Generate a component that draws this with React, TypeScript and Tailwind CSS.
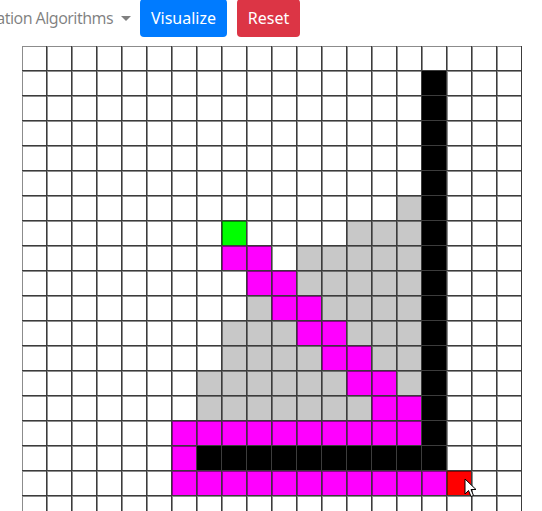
import React from "react";

const board = [
  "....................",
  "................#...",
  "................#...",
  "................#...",
  "................#...",
  "................#...",
  "...............g#...",
  "........S....ggg#...",
  "........mm.ggggg#...",
  ".........mmggggg#...",
  ".........gmmgggg#...",
  "........gggmmggg#...",
  "........ggggmmgg#...",
  ".......ggggggmmg#...",
  ".......gggggggmm#...",
  "......mmmmmmmmmm#...",
  "......m##########...",
  "......mmmmmmmmmmmE..",
  "....................",
  "....................",
];

const cellColor: Record<string, string> = {
  ".": "bg-white",
  "#": "bg-black",
  g: "bg-[#c8c8c8]",
  m: "bg-[#ff00ff]",
  S: "bg-[#00ff00]",
  E: "bg-[#ff0000]",
};

const Cursor = () => (
  <svg
    className="absolute left-[17px] top-[7px] z-10"
    width="13"
    height="20"
    viewBox="0 0 13 20"
  >
    <path
      d="M1 1 L1 16 L4.5 12.5 L7 18.5 L9.5 17.5 L7 11.5 L12 11.5 Z"
      fill="#fff"
      stroke="#000"
      strokeWidth="1"
      strokeLinejoin="round"
    />
  </svg>
);

const Cell = ({ type }: { type: string }) => (
  <div
    className={`relative box-border w-[25px] h-[25px] border-r border-b border-[#3c3c3c] shadow-[inset_1px_1px_0_rgba(0,0,0,0.45)] ${cellColor[type]}`}
  >
    {type === "E" && <Cursor />}
  </div>
);

export default function App() {
  return (
    <div className="bg-white min-h-screen font-['Noto_Sans',sans-serif] overflow-hidden h-[511px]">
      <div className="flex items-center h-[38px] -mt-px">
        <div className="w-[131px] flex justify-end items-center overflow-hidden whitespace-nowrap text-base tracking-[-0.55px] text-[rgba(0,0,0,0.5)]">
          <span>Visualization Algorithms</span>
          <span className="ml-[8px] w-0 h-0 border-x-[5px] border-x-transparent border-t-[5px] border-t-[#808080]" />
        </div>
        <button className="ml-[9px] w-[87px] h-[38px] rounded bg-[#007bff] text-white text-base">
          Visualize
        </button>
        <button className="ml-[10px] w-[63px] h-[38px] rounded bg-[#dc3545] text-white text-base">
          Reset
        </button>
      </div>
      <div className="mt-[9px] ml-[22px] flex flex-col w-[500px]">
        {board.map((row, r) => (
          <div key={r} className="flex">
            {row.split("").map((t, c) => (
              <Cell key={c} type={t} />
            ))}
          </div>
        ))}
      </div>
    </div>
  );
}
